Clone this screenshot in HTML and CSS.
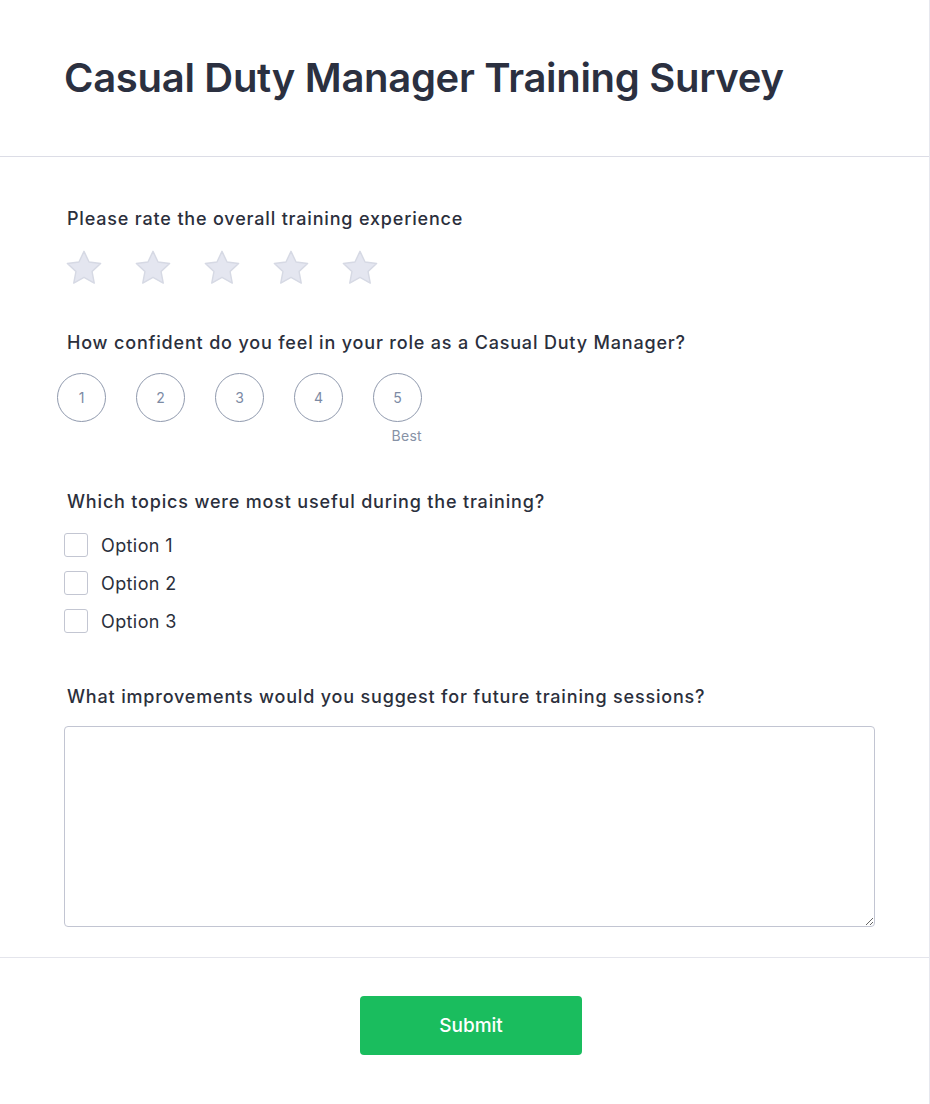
FILE: index.html
```html
<!DOCTYPE html>
<html lang="en">
<head>
    <meta charset="UTF-8">
    <meta name="viewport" content="width=device-width, initial-scale=1.0">
    <title>Casual Duty Manager Training Survey</title>
    <link rel="stylesheet" href="styles.css">
</head>
<body>
    <div class="survey">
        <header class="survey-header">
            <h1>Casual Duty Manager Training Survey</h1>
        </header>

        <form class="survey-body">
            <div class="field field-rating">
                <label class="question">Please rate the overall training experience</label>
                <div class="stars">
                    <svg class="star" viewBox="0 0 40 38"><path d="M20 2.5l5.3 11.2 12.2 1.6-9 8.5 2.3 12.1L20 30 9.2 35.9l2.3-12.1-9-8.5 12.2-1.6z"/></svg>
                    <svg class="star" viewBox="0 0 40 38"><path d="M20 2.5l5.3 11.2 12.2 1.6-9 8.5 2.3 12.1L20 30 9.2 35.9l2.3-12.1-9-8.5 12.2-1.6z"/></svg>
                    <svg class="star" viewBox="0 0 40 38"><path d="M20 2.5l5.3 11.2 12.2 1.6-9 8.5 2.3 12.1L20 30 9.2 35.9l2.3-12.1-9-8.5 12.2-1.6z"/></svg>
                    <svg class="star" viewBox="0 0 40 38"><path d="M20 2.5l5.3 11.2 12.2 1.6-9 8.5 2.3 12.1L20 30 9.2 35.9l2.3-12.1-9-8.5 12.2-1.6z"/></svg>
                    <svg class="star" viewBox="0 0 40 38"><path d="M20 2.5l5.3 11.2 12.2 1.6-9 8.5 2.3 12.1L20 30 9.2 35.9l2.3-12.1-9-8.5 12.2-1.6z"/></svg>
                </div>
            </div>

            <div class="field field-scale">
                <label class="question">How confident do you feel in your role as a Casual Duty Manager?</label>
                <div class="scale">
                    <div class="scale-item"><span class="scale-circle">1</span></div>
                    <div class="scale-item"><span class="scale-circle">2</span></div>
                    <div class="scale-item"><span class="scale-circle">3</span></div>
                    <div class="scale-item"><span class="scale-circle">4</span></div>
                    <div class="scale-item"><span class="scale-circle">5</span><span class="scale-hint">Best</span></div>
                </div>
            </div>

            <div class="field field-options">
                <label class="question">Which topics were most useful during the training?</label>
                <div class="options">
                    <label class="option"><span class="checkbox"></span>Option 1</label>
                    <label class="option"><span class="checkbox"></span>Option 2</label>
                    <label class="option"><span class="checkbox"></span>Option 3</label>
                </div>
            </div>

            <div class="field field-text">
                <label class="question">What improvements would you suggest for future training sessions?</label>
                <textarea class="answer"></textarea>
            </div>
        </form>

        <footer class="survey-footer">
            <button class="submit-button" type="button">Submit</button>
        </footer>
    </div>
</body>
</html>
```

FILE: styles.css
```css
body {
    margin: 0;
    background-color: #ffffff;
    font-family: Inter, "Noto Sans", sans-serif;
    color: #2b2f3c;
}
.survey {
    width: 930px;
    min-height: 1104px;
    box-sizing: border-box;
    border-right: 1px solid #e6e7ee;
}
.survey-header {
    padding: 54px 64px;
    border-bottom: 1px solid #dcdde6;
}
.survey-header h1 {
    margin: 0;
    font-size: 40px;
    line-height: 48px;
    font-weight: 600;
    color: #2b3040;
    letter-spacing: -0.3px;
}
.survey-body {
    padding: 50px 54px 30px 64px;
    border-bottom: 1px solid #e4e5ec;
}
.field {
    margin-bottom: 45px;
}
.field:last-child {
    margin-bottom: 0;
}
.question {
    display: block;
    padding-left: 3px;
    font-size: 18px;
    line-height: 24px;
    font-weight: 500;
    letter-spacing: 0.82px;
    color: #2b2f3c;
}
.field-rating .question {
    margin-bottom: 17px;
}
.stars {
    display: flex;
    gap: 31px;
    padding-left: 1px;
}
.star {
    width: 38px;
    height: 38px;
}
.star path {
    fill: #e4e6f0;
    stroke: #d6d9e4;
    stroke-width: 1.5;
    stroke-linejoin: round;
}
.field-scale .question {
    margin-bottom: 18px;
}
.scale {
    display: flex;
    gap: 30px;
    margin-left: -7px;
}
.scale-item {
    display: flex;
    flex-direction: column;
    align-items: flex-end;
    width: 49px;
}
.scale-circle {
    display: flex;
    align-items: center;
    justify-content: center;
    width: 49px;
    height: 49px;
    box-sizing: border-box;
    border: 1px solid #8f99ad;
    border-radius: 50%;
    font-size: 14px;
    color: #7c8aa4;
}
.scale-hint {
    margin-top: 5px;
    font-size: 14px;
    line-height: 18px;
    letter-spacing: 0.3px;
    color: #8792a6;
}
.field-scale .scale-item:not(:last-child) {
    padding-bottom: 23px;
}
.field-options {
    margin-bottom: 52px;
}
.field-options .question {
    margin-bottom: 19px;
}
.options {
    display: flex;
    flex-direction: column;
    gap: 14px;
}
.option {
    display: flex;
    align-items: center;
    gap: 13px;
    height: 24px;
    font-size: 18px;
    letter-spacing: 0.4px;
    color: #2b2f3c;
}
.checkbox {
    width: 24px;
    height: 24px;
    box-sizing: border-box;
    border: 1px solid #c3c6d2;
    border-radius: 3px;
    background-color: #ffffff;
}
.field-text .question {
    margin-bottom: 17px;
}
.answer {
    display: block;
    width: 100%;
    height: 201px;
    box-sizing: border-box;
    border: 1px solid #c2c5d2;
    border-radius: 4px;
    font-family: inherit;
    font-size: 16px;
    padding: 10px;
}
.survey-footer {
    display: flex;
    justify-content: center;
    padding: 38px 54px 50px 67px;
}
.submit-button {
    width: 222px;
    height: 59px;
    border: none;
    border-radius: 4px;
    background-color: #1abd5e;
    color: #ffffff;
    font-family: inherit;
    font-size: 19px;
    font-weight: 500;
    cursor: pointer;
}
```
